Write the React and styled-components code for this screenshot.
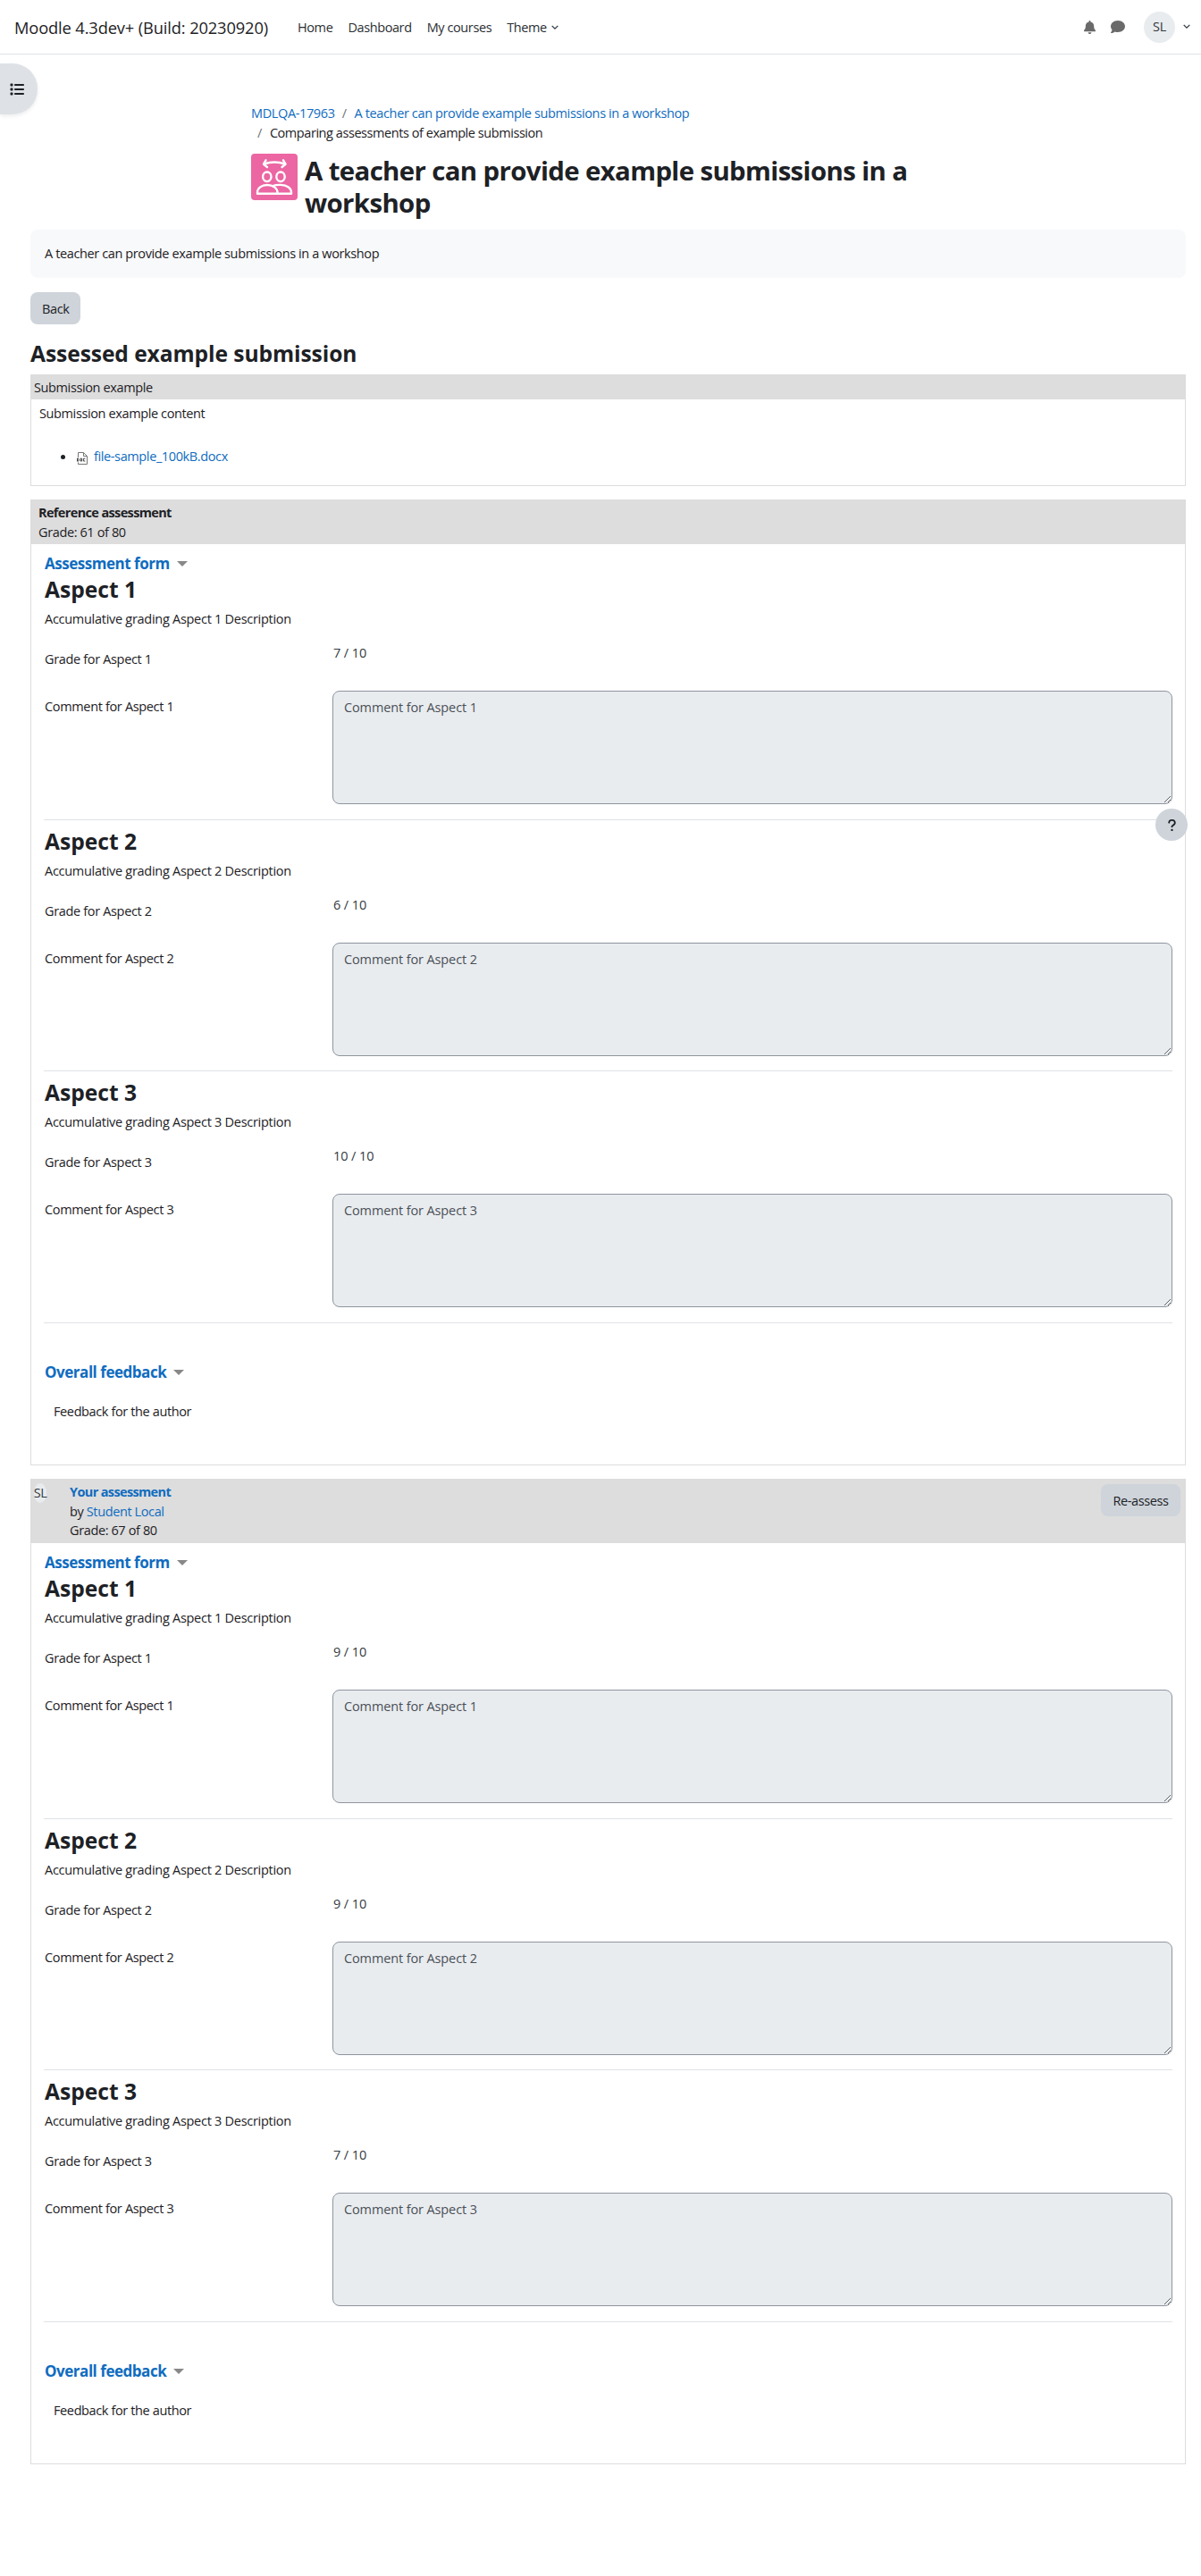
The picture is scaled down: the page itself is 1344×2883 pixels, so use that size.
import React from 'react';
import styled, { createGlobalStyle } from 'styled-components';
import { FaBell, FaComment, FaList, FaQuestion } from 'react-icons/fa6';

const GlobalStyle = createGlobalStyle`
    *, *::before, *::after {
        box-sizing: border-box;
    }
    body {
        margin: 0;
        min-height: 2883px;
        background: #fff;
        color: #1d2125;
        font-family: 'Open Sans', 'Noto Sans', sans-serif;
        font-size: 14.5px;
        line-height: 22px;
        letter-spacing: -0.38px;
    }
    h1, h2, h3, h4, p, ul {
        margin: 0;
        padding: 0;
    }
`;

const Link = styled.a`
    color: #0f6cbf;
    text-decoration: none;
    font-weight: ${props => props.$bold ? 700 : 400};
`;

const Navbar = styled.nav`
    display: flex;
    align-items: center;
    height: 61px;
    padding: 0 12px 0 16px;
    border-bottom: 1px solid #dee2e6;
`;

const Brand = styled.span`
    width: 317px;
    padding-top: 1px;
    font-size: 18.3px;
    letter-spacing: -0.13px;
    white-space: nowrap;
`;

const NavItem = styled.span`
    display: flex;
    align-items: center;
    gap: 5px;
    margin-right: 17px;
    padding-top: 1px;
    color: #2b2f33;
    letter-spacing: -0.4px;
`;

const UserArea = styled.div`
    display: flex;
    align-items: center;
    margin-left: auto;
    color: #6a6a6a;
    svg + svg {
        margin-left: 16px;
    }
`;

const Avatar = styled.span`
    display: flex;
    align-items: center;
    justify-content: center;
    width: 35px;
    height: 35px;
    margin: 0 9px 0 21px;
    border-radius: 50%;
    background: #e9ecef;
    color: #343a40;
`;

const DrawerToggle = styled.button`
    position: absolute;
    top: 71px;
    left: 0;
    display: flex;
    align-items: center;
    width: 42px;
    height: 57px;
    padding: 0 0 0 11px;
    border: 0;
    border-radius: 0 28px 28px 0;
    background: #dee2e6;
    color: #1d2125;
    box-shadow: 0 2px 4px rgba(0, 0, 0, 0.08);
`;

const HelpButton = styled.button`
    position: absolute;
    top: 905px;
    left: 1293px;
    display: flex;
    align-items: center;
    justify-content: center;
    width: 36px;
    height: 36px;
    padding: 0;
    border: 0;
    border-radius: 50%;
    background: #ced4da;
    color: #1d2125;
`;

const PageHeader = styled.header`
    width: 782px;
    margin: 0 auto;
    padding-top: 55px;
`;

const Breadcrumb = styled.div`
    height: 22px;
    letter-spacing: ${props => props.$last ? '-0.44px' : '-0.37px'};
    padding-left: ${props => props.$last ? '7px' : 0};
`;

const Slash = styled.span`
    margin: 0 9px 0 ${props => props.$first ? 0 : '8px'};
    color: #6a737b;
`;

const TitleRow = styled.div`
    display: flex;
    gap: 8px;
    width: 760px;
    margin-top: 12px;
`;

const ActivityIcon = styled.span`
    flex: none;
    width: 52px;
    height: 52px;
    border-radius: 4px;
    background: #eb66a2;
`;

const Title = styled.h1`
    padding-top: 1px;
    font-size: 29.4px;
    line-height: 36px;
    letter-spacing: -0.63px;
`;

const Main = styled.main`
    width: 1293px;
    margin: 12px 0 0 34px;
`;

const Intro = styled.div`
    height: 54px;
    padding: 16px;
    border-radius: 8px;
    background: #f8f9fa;
`;

const Button = styled.button`
    height: 36px;
    padding: 1px 13px 0;
    border: 0;
    border-radius: 8px;
    background: #ced4da;
    color: #1d2125;
    font: inherit;
    letter-spacing: inherit;
`;

const BackButton = styled(Button)`
    display: block;
    width: 56px;
    margin-top: 16px;
`;

const ReassessButton = styled(Button)`
    width: 89px;
    margin: 2px 1px 0 auto;
`;

const SectionTitle = styled.h2`
    font-size: 24.6px;
    line-height: 30px;
    letter-spacing: -0.08px;
`;

const PageTitle = styled(SectionTitle)`
    margin-top: 18px;
`;

const AspectTitle = styled(SectionTitle)`
    padding-left: 1px;
    letter-spacing: 0;
`;

const Box = styled.section`
    margin-top: ${props => props.$gap || '15px'};
    border: 1px solid #ddd;
`;

const BoxHeader = styled.div`
    display: flex;
    height: ${props => props.$height};
    padding: ${props => props.$padding || '2px 4px'};
    background: #ddd;
    line-height: 21.7px;
`;

const BoldText = styled.div`
    font-weight: 700;
    letter-spacing: -0.64px;
`;

const SubmissionBody = styled.div`
    height: 96px;
    padding: 5px 9px;
`;

const Files = styled.ul`
    margin-top: 26px;
    list-style: none;
`;

const FileItem = styled.li`
    display: flex;
    align-items: center;
    padding-left: 24px;
    &::before {
        content: '';
        width: 5px;
        height: 5px;
        margin-right: 13px;
        border-radius: 50%;
        background: #1d2125;
    }
    svg {
        margin: 3px 7px 0 0;
    }
`;

const SmallAvatar = styled.span`
    display: flex;
    align-items: center;
    justify-content: center;
    width: 14px;
    height: 22px;
    margin: 1px 26px 0 -1px;
    border-radius: 50%;
    background: #e9ecef;
    color: #343a40;
`;

const AssessmentBody = styled.div`
    height: 1030px;
    padding: 14px 14px 0;
`;

const Collapser = styled.h3`
    display: flex;
    align-items: center;
    gap: 8px;
    height: 16px;
    margin: ${props => props.$top || 0} 0 -3px;
    padding-left: 1px;
    color: #0f6cbf;
    font-size: 17px;
    line-height: 16px;
    letter-spacing: -0.47px;
`;

const Caret = styled.span`
    border: 6px solid transparent;
    border-top-color: #888;
    border-bottom: 0;
`;

const AspectBlock = styled.div`
    height: 281.5px;
    padding-top: 9px;
    border-bottom: 1px solid #dee2e6;
`;

const Description = styled.p`
    margin: 7px 0 16px;
    padding-left: 1px;
    letter-spacing: -0.28px;
`;

const FormRow = styled.div`
    display: grid;
    grid-template-columns: 323px 1fr;
    height: ${props => props.$height};
`;

const Label = styled.label`
    padding: 7px 0 0 1px;
    letter-spacing: -0.34px;
`;

const Grade = styled.span`
    padding-left: 1px;
    color: #343a40;
    letter-spacing: -0.1px;
`;

const Comment = styled.textarea`
    width: 100%;
    height: 127px;
    padding: 7px 12px;
    border: 1px solid #8f959e;
    border-radius: 8px;
    outline: 0;
    background: #e9ecef;
    color: #495057;
    font: inherit;
    letter-spacing: -0.12px;
    resize: vertical;
`;

const Feedback = styled.p`
    margin: 28px 0 0 11px;
`;

const Chevron = () => (
    <svg width="8" height="6" viewBox="0 0 8 6" fill="none" stroke="#343a40" strokeWidth="1.3">
        <path d="M0.7 0.9L4 4.2L7.3 0.9" />
    </svg>
);

const WorkshopIcon = () => (
    <svg width="52" height="52" viewBox="0 0 52 52" fill="none" stroke="#fff" strokeWidth="2.4" strokeLinecap="round" strokeLinejoin="round">
        <path d="M14.5 11.5Q26 7.5 38 11.5" />
        <path d="M16.5 7.3L14 11.7L18 15M36 7.3L38.5 11.7L34.5 15" />
        <ellipse cx="17.8" cy="25.8" rx="4.7" ry="5.3" />
        <ellipse cx="33" cy="25.8" rx="4.7" ry="5.3" />
        <path d="M7 44.7V43.5C7 38.5 11.8 35 18 35S29.5 38.5 29.5 43.5V44.7Z" />
        <path d="M24.5 36.2C27 35 30 34.8 33 34.9C40.5 35.2 45 38.7 45 43.5V44.7H29.5" />
    </svg>
);

const DocIcon = () => (
    <svg width="12" height="14" viewBox="0 0 12 14" fill="none" stroke="#777" strokeWidth="1">
        <path d="M1.5 6V0.5H7.5L11.5 4.5V13.5H1.5V11.5" />
        <path d="M7.5 0.5V4.5H11.5" />
        <path d="M0.5 7V10.2H1.5Q2.6 8.6 1.5 7ZM4 7.2H5.6V10H4ZM9.4 7.2H7.4V10H9.4" stroke="#444" />
    </svg>
);

const Aspect = ({ number, grade }) => (
    <AspectBlock>
        <AspectTitle as="h4">Aspect {number}</AspectTitle>
        <Description>Accumulative grading Aspect {number} Description</Description>
        <FormRow $height="53px">
            <Label>Grade for Aspect {number}</Label>
            <Grade>{grade} / 10</Grade>
        </FormRow>
        <FormRow $height="127px">
            <Label>Comment for Aspect {number}</Label>
            <Comment readOnly value={`Comment for Aspect ${number}`} />
        </FormRow>
    </AspectBlock>
);

const Assessment = ({ grades }) => (
    <AssessmentBody>
        <Collapser>Assessment form <Caret /></Collapser>
        {grades.map((grade, i) => <Aspect key={i} number={i + 1} grade={grade} />)}
        <Collapser $top="47px">Overall feedback <Caret /></Collapser>
        <Feedback>Feedback for the author</Feedback>
    </AssessmentBody>
);

const App = () => {
    return (
        <>
            <GlobalStyle />
            <Navbar>
                <Brand>Moodle 4.3dev+ (Build: 20230920)</Brand>
                <NavItem>Home</NavItem>
                <NavItem>Dashboard</NavItem>
                <NavItem>My courses</NavItem>
                <NavItem>Theme <Chevron /></NavItem>
                <UserArea>
                    <FaBell size={15} />
                    <FaComment size={16} />
                    <Avatar>SL</Avatar>
                    <Chevron />
                </UserArea>
            </Navbar>
            <DrawerToggle><FaList size={16} /></DrawerToggle>
            <PageHeader>
                <Breadcrumb>
                    <Link>MDLQA-17963</Link>
                    <Slash>/</Slash>
                    <Link>A teacher can provide example submissions in a workshop</Link>
                </Breadcrumb>
                <Breadcrumb $last>
                    <Slash $first>/</Slash>
                    Comparing assessments of example submission
                </Breadcrumb>
                <TitleRow>
                    <ActivityIcon><WorkshopIcon /></ActivityIcon>
                    <Title>A teacher can provide example submissions in a<br />workshop</Title>
                </TitleRow>
            </PageHeader>
            <Main>
                <Intro>A teacher can provide example submissions in a workshop</Intro>
                <BackButton>Back</BackButton>
                <PageTitle>Assessed example submission</PageTitle>
                <Box $gap="8px">
                    <BoxHeader $height="27px" $padding="3px 3px">Submission example</BoxHeader>
                    <SubmissionBody>
                        <p>Submission example content</p>
                        <Files>
                            <FileItem><DocIcon /><Link>file-sample_100kB.docx</Link></FileItem>
                        </Files>
                    </SubmissionBody>
                </Box>
                <Box>
                    <BoxHeader $height="49px" $padding="3px 8px">
                        <div>
                            <BoldText>Reference assessment</BoldText>
                            <div>Grade: 61 of 80</div>
                        </div>
                    </BoxHeader>
                    <Assessment grades={[7, 6, 10]} />
                </Box>
                <Box>
                    <BoxHeader $height="71px" $padding="3px 4px">
                        <SmallAvatar>SL</SmallAvatar>
                        <div>
                            <BoldText><Link $bold>Your assessment</Link></BoldText>
                            <div>by <Link>Student Local</Link></div>
                            <div>Grade: 67 of 80</div>
                        </div>
                        <ReassessButton>Re-assess</ReassessButton>
                    </BoxHeader>
                    <Assessment grades={[9, 9, 7]} />
                </Box>
            </Main>
            <HelpButton><FaQuestion size={15} /></HelpButton>
        </>
    );
};

export default App;
